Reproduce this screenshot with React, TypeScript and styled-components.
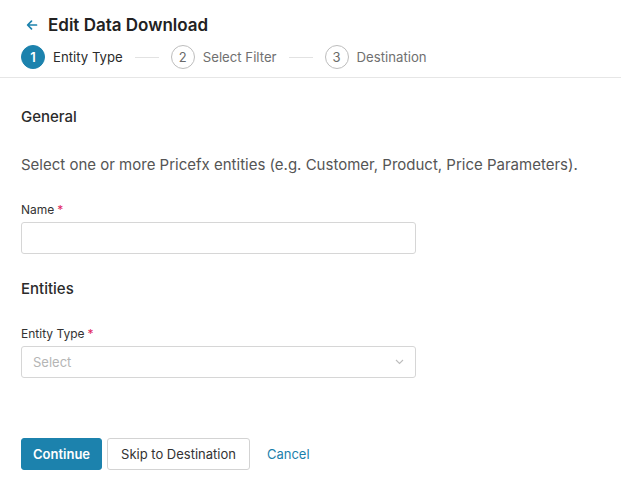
import React from "react";
import styled, { createGlobalStyle } from "styled-components";

const Global = createGlobalStyle`
  html, body { margin: 0; padding: 0; background: #fff; }
  body { font-family: Inter, "Noto Sans", sans-serif; color: #2b2b2b; }
  * { box-sizing: border-box; }
`;

const Page = styled.div`
  width: 621px;
  display: flex;
  flex-direction: column;
`;

const Header = styled.header`
  padding: 13px 21px 0;
  border-bottom: 1px solid #e6e6e6;
  display: flex;
  flex-direction: column;
  gap: 8px;
  padding-bottom: 8px;
`;

const TitleRow = styled.div`
  display: flex;
  align-items: center;
  gap: 10px;
  height: 24px;
  padding-left: 5px;
`;

const Title = styled.h1`
  margin: 0;
  font-size: 17px;
  font-weight: 600;
  color: #222;
`;

const Steps = styled.div`
  display: flex;
  align-items: center;
  height: 24px;
`;

const Step = styled.div`
  display: flex;
  align-items: center;
  gap: 8px;
`;

const Circle = styled.span<{ $active?: boolean }>`
  width: 24px;
  height: 24px;
  border-radius: 50%;
  display: flex;
  align-items: center;
  justify-content: center;
  font-size: 13px;
  font-weight: ${(p) => (p.$active ? 600 : 400)};
  color: ${(p) => (p.$active ? "#fff" : "#6a6a6a")};
  background: ${(p) => (p.$active ? "#1c82ad" : "#fff")};
  border: 1px solid ${(p) => (p.$active ? "#1c82ad" : "#bdbdbd")};
`;

const StepLabel = styled.span<{ $active?: boolean }>`
  font-size: 13.2px;
  color: ${(p) => (p.$active ? "#2b2b2b" : "#707070")};
`;

const Connector = styled.span`
  width: 24px;
  height: 1px;
  background: #e2e2e2;
  margin: 0 12px;
`;

const Body = styled.main`
  padding: 0 21px;
  display: flex;
  flex-direction: column;
`;

const SectionTitle = styled.h2<{ $top: number }>`
  margin: ${(p) => p.$top}px 0 0;
  font-size: 15px;
  font-weight: 500;
  color: #2b2b2b;
  line-height: 20px;
`;

const Description = styled.p`
  margin: 28px 0 0;
  font-size: 15px;
  color: #555;
  line-height: 20px;
`;

const Field = styled.div<{ $top: number }>`
  margin-top: ${(p) => p.$top}px;
  display: flex;
  flex-direction: column;
  gap: 4px;
  width: 395px;
`;

const Label = styled.label`
  font-size: 12px;
  color: #333;
  line-height: 16px;
  font-weight: 400;
`;

const Req = styled.span`
  color: #e0245e;
  margin-left: 3px;
`;

const Input = styled.div`
  height: 32px;
  border: 1px solid #d6d6d6;
  border-radius: 3px;
  background: #fff;
`;

const SelectBox = styled.div`
  height: 32px;
  border: 1px solid #d6d6d6;
  border-radius: 3px;
  display: flex;
  align-items: center;
  justify-content: space-between;
  padding: 0 11px;
  font-size: 13px;
  color: #b5b5b5;
`;

const Actions = styled.div`
  margin-top: 60px;
  display: flex;
  align-items: center;
  gap: 5px;
`;

const Button = styled.button<{ $variant: "primary" | "default" | "link" }>`
  height: 32px;
  font-family: Inter, "Noto Sans", sans-serif;
  font-size: 13px;
  border-radius: 3px;
  padding: 0 ${(p) => (p.$variant === "default" ? 13 : 11)}px;
  cursor: pointer;
  font-weight: ${(p) => (p.$variant === "primary" ? 600 : 400)};
  color: ${(p) =>
    p.$variant === "primary" ? "#fff" : p.$variant === "link" ? "#1c7fab" : "#333"};
  background: ${(p) => (p.$variant === "primary" ? "#1c82ad" : "#fff")};
  border: 1px solid
    ${(p) =>
      p.$variant === "primary" ? "#1c82ad" : p.$variant === "link" ? "transparent" : "#d3d3d3"};
`;

const Arrow = () => (
  <svg width="12" height="12" viewBox="0 0 12 12" fill="none">
    <path d="M10.5 6H1.8M5.5 2.2L1.6 6l3.9 3.8" stroke="#1c82ad" strokeWidth="1.7" strokeLinecap="round" strokeLinejoin="round" />
  </svg>
);

const Chevron = () => (
  <svg width="9" height="6" viewBox="0 0 9 6" fill="none">
    <path d="M1 1l3.5 3.5L8 1" stroke="#bdbdbd" strokeWidth="1.1" />
  </svg>
);

export default function App() {
  return (
    <Page>
      <Global />
      <Header>
        <TitleRow>
          <Arrow />
          <Title>Edit Data Download</Title>
        </TitleRow>
        <Steps>
          <Step>
            <Circle $active>1</Circle>
            <StepLabel $active>Entity Type</StepLabel>
          </Step>
          <Connector />
          <Step>
            <Circle>2</Circle>
            <StepLabel>Select Filter</StepLabel>
          </Step>
          <Connector />
          <Step>
            <Circle>3</Circle>
            <StepLabel>Destination</StepLabel>
          </Step>
        </Steps>
      </Header>
      <Body>
        <SectionTitle $top={29}>General</SectionTitle>
        <Description>
          Select one or more Pricefx entities (e.g. Customer, Product, Price Parameters).
        </Description>
        <Field $top={27}>
          <Label>
            Name<Req>*</Req>
          </Label>
          <Input />
        </Field>
        <SectionTitle $top={25}>Entities</SectionTitle>
        <Field $top={27}>
          <Label>
            Entity Type<Req>*</Req>
          </Label>
          <SelectBox>
            Select
            <Chevron />
          </SelectBox>
        </Field>
        <Actions>
          <Button $variant="primary">Continue</Button>
          <Button $variant="default">Skip to Destination</Button>
          <Button $variant="link">Cancel</Button>
        </Actions>
      </Body>
    </Page>
  );
}
